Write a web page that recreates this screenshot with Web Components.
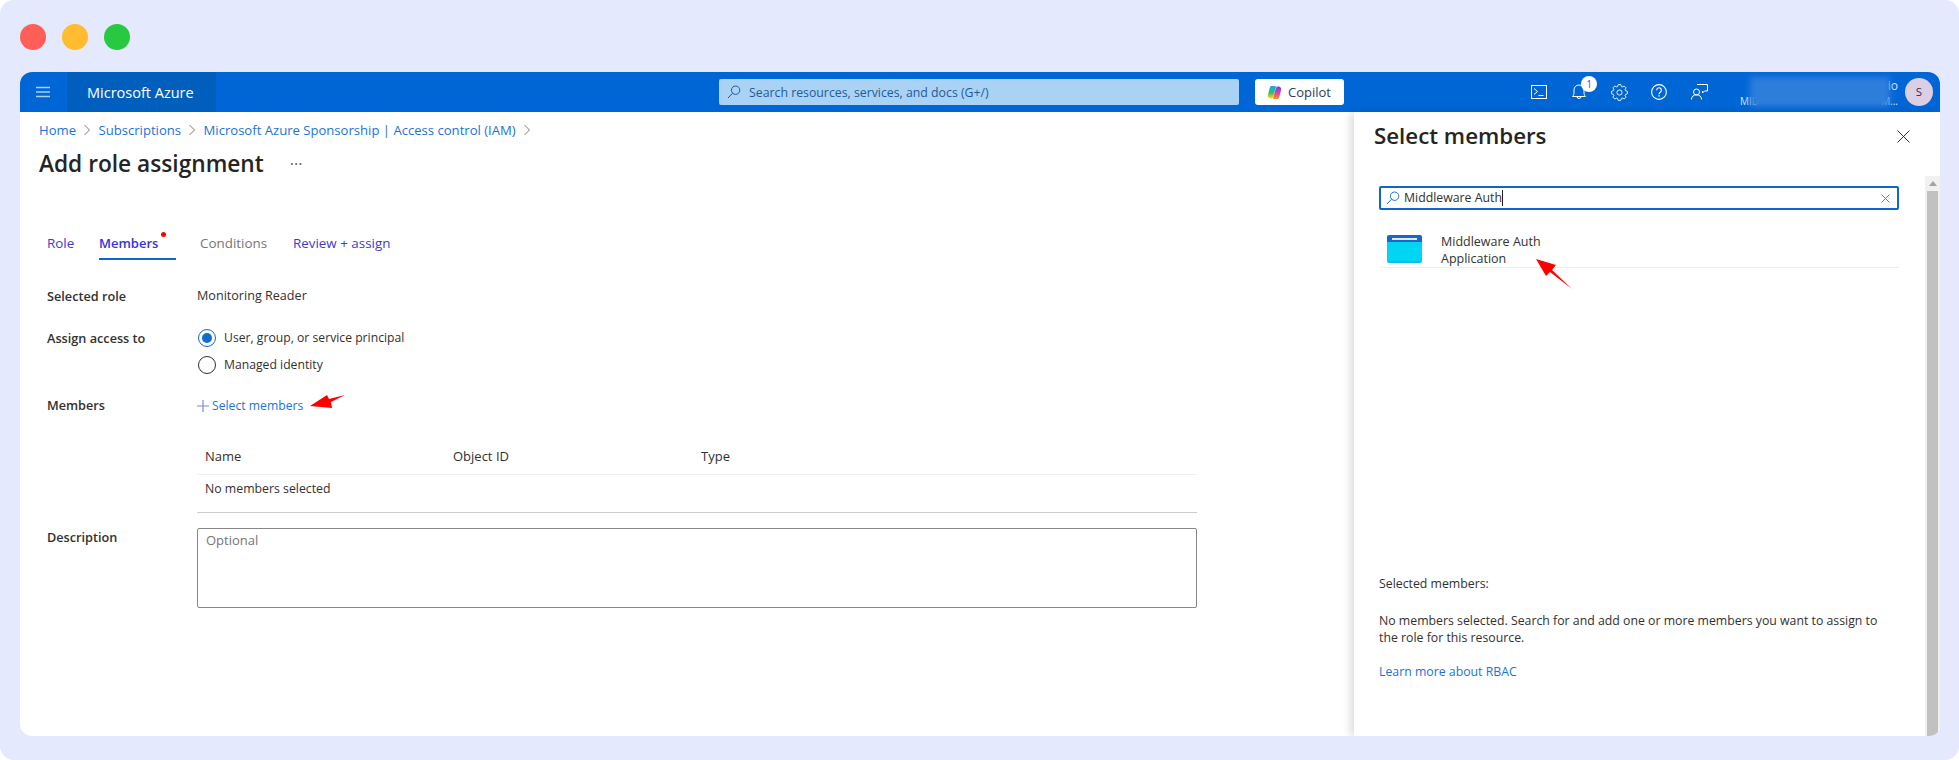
<!DOCTYPE html>
<html>
<head>
<meta charset="utf-8">
<title>Add role assignment</title>
<style>
  html, body { margin: 0; background: #fff; overflow: hidden; }
  body { font-family: "Open Sans", "Noto Sans", sans-serif; color: #323130; }
</style>
</head>
<body>
<shot-frame>
  <traffic-lights></traffic-lights>
  <azure-window>
    <azure-topbar slot="bar"></azure-topbar>
    <role-page></role-page>
    <members-panel></members-panel>
  </azure-window>
  <annot-arrow points="310,406 327,395 329,399 345,395 331,402 332,408"></annot-arrow>
  <annot-arrow points="1536,259 1556,265 1552,270 1572,289 1550,272 1546,276"></annot-arrow>
</shot-frame>

<script>
const FONT = '"Open Sans", "Noto Sans", sans-serif';

function gearPath(cx, cy, teeth, rOut, rIn) {
  let d = '';
  const step = Math.PI * 2 / teeth;
  for (let i = 0; i < teeth; i++) {
    const a = i * step;
    const pts = [[a - step * .42, rIn], [a - step * .2, rOut], [a + step * .2, rOut], [a + step * .42, rIn]];
    pts.forEach((p, j) => {
      const x = (cx + Math.cos(p[0]) * p[1]).toFixed(2);
      const y = (cy + Math.sin(p[0]) * p[1]).toFixed(2);
      d += (i === 0 && j === 0 ? 'M' : 'L') + x + ' ' + y + ' ';
    });
  }
  return d + 'Z';
}

class Base extends HTMLElement {
  constructor() {
    super();
    this.attachShadow({mode: 'open'});
    this.shadowRoot.innerHTML = this.render();
  }
}

class ShotFrame extends Base {
  render() { return `<style>
    :host { display: block; box-sizing: border-box; position: relative; width: 1959px; height: 760px;
      padding: 24px 19px 24px 20px; background: #e4e9fd; border-radius: 14px; overflow: hidden; }
  </style><slot></slot>`; }
}

class TrafficLights extends Base {
  render() { return `<style>
    :host { display: flex; gap: 16px; height: 26px; margin-bottom: 22px; }
    i { width: 26px; height: 26px; border-radius: 50%; }
  </style><i style="background:#ff5f57"></i><i style="background:#febc2e"></i><i style="background:#28c840"></i>`; }
}

class AzureWindow extends Base {
  render() { return `<style>
    :host { display: grid; grid-template-columns: 1fr 586px; grid-template-rows: 40px 1fr; height: 664px;
      background: #fff; border-radius: 12px 12px 10px 12px; overflow: hidden; }
    ::slotted([slot=bar]) { grid-column: 1 / 3; }
  </style><slot name="bar"></slot><slot></slot>`; }
}

class AzureTopbar extends Base {
  render() { return `<style>
    :host { display: flex; align-items: center; height: 40px; background: #0066d6; color: #fff; font: 14px ${FONT}; }
    .menu { width: 47px; display: flex; justify-content: center; }
    .menu svg { margin-right: 1px; }
    .brand { width: 149px; height: 40px; box-sizing: border-box; padding-left: 20px; display: flex; align-items: center;
      background: #005fbd; font-size: 14.5px; }
    .search { margin-left: 503px; width: 520px; height: 26px; box-sizing: border-box; padding-left: 8px; display: flex; align-items: center;
      gap: 8px; background: #aad2f4; border-radius: 2px; color: #1c5c99; font-size: 12.3px; }
    .copilot { margin-left: 16px; width: 89px; height: 26px; box-sizing: border-box; padding-left: 12px; display: flex; align-items: center;
      gap: 6px; background: #fff; border-radius: 3px; color: #2c3a66; font-size: 13px; font-weight: 500; }
    .icons { margin-left: 175px; display: flex; }
    .ic { width: 40px; height: 40px; display: flex; align-items: center; justify-content: center; position: relative; }
    .badge { position: absolute; left: 22px; top: 4px; width: 16px; height: 16px; border-radius: 50%; background: #fff; color: #0066d6;
      font-size: 10px; line-height: 16px; text-align: center; }
    svg { display: block; }
    .user { position: relative; width: 179px; height: 30px; margin-right: 7px; font-size: 12px; color: #dcebfb; }
    .l1 { position: absolute; right: 0; top: 0; line-height: 18px; }
    .l2 { position: absolute; left: 21px; right: 0; top: 17px; display: flex; justify-content: space-between; font-size: 10px; line-height: 14px; }
    .blur { position: absolute; left: 31px; width: 140px; top: 0; height: 30px; background: #2d7edb; filter: blur(3px); }
    .avatar { width: 28px; height: 28px; border-radius: 50%; background: #dccfe4; color: #3e1f63; font-size: 11.5px; line-height: 28px; text-align: center; }
  </style>
  <div class="menu"><svg width="14" height="12" viewBox="0 0 14 12" stroke="#a9d0f5" stroke-width="1.4"><path d="M0 1.5h14M0 6h14M0 10.5h14"/></svg></div>
  <div class="brand">Microsoft Azure</div>
  <div class="search">
    <svg width="14" height="14" viewBox="0 0 14 14" fill="none" stroke="#1c5c99" stroke-width="1"><circle cx="8.6" cy="5.2" r="4.2"/><path d="M5.6 8.2 1 13"/></svg>
    <span>Search resources, services, and docs (G+/)</span>
  </div>
  <div class="copilot">
    <svg width="15" height="15" viewBox="0 0 15 15">
      <defs>
        <linearGradient id="cl" x1="0" y1="0" x2="0" y2="1"><stop offset="0" stop-color="#1fa8ee"/><stop offset=".55" stop-color="#2fc25a"/><stop offset="1" stop-color="#efd41c"/></linearGradient>
        <linearGradient id="cr" x1="0" y1="0" x2="0" y2="1"><stop offset="0" stop-color="#6a4be6"/><stop offset=".55" stop-color="#ee3c9c"/><stop offset="1" stop-color="#f78c26"/></linearGradient>
      </defs>
      <path fill="url(#cl)" stroke="url(#cl)" stroke-width="1.6" stroke-linejoin="round" d="M4.300 1.800H8.200L5.600 10.800 4.800 12.600H3.400C2 12.600 1.300 11.500 1.700 10.200L3.300 3.600C3.500 2.600 3.800 1.800 4.300 1.800Z"/>
      <path fill="url(#cr)" stroke="url(#cr)" stroke-width="1.600" stroke-linejoin="round" d="M10.700 13.200H6.800L9.400 4.200 10.200 2.400H11.600C13 2.400 13.700 3.500 13.300 4.800L11.700 11.400C11.500 12.400 11.200 13.200 10.700 13.200Z"/>
    </svg>
    <span>Copilot</span>
  </div>
  <div class="icons">
    <div class="ic"><svg width="16" height="14" viewBox="0 0 16 14" fill="none" stroke="#fff" stroke-width="1"><rect x=".5" y=".5" width="15" height="13"/><path d="M3 3.500 6.500 6.500 3 9.500M7.500 10.500h5"/></svg></div>
    <div class="ic"><svg width="14" height="16" viewBox="0 0 14 16" fill="none" stroke="#fff" stroke-width="1"><path d="M.5 12.500h13c-1-1-1.500-2-1.500-4.500V6a5 5 0 0 0-10 0v2c0 2.500-.5 3.500-1.500 4.500ZM5 12.500a2 2 0 0 0 4 0"/></svg><span class="badge">1</span></div>
    <div class="ic"><svg width="17" height="17" viewBox="0 0 17 17" fill="none" stroke="#e3effb" stroke-width="1"><path d="${gearPath(8.5, 8.5, 8, 8, 6.2)}"/><circle cx="8.5" cy="8.500" r="2.600"/></svg></div>
    <div class="ic"><svg width="16" height="16" viewBox="0 0 16 16" fill="none" stroke="#fff" stroke-width="1.100"><circle cx="8" cy="8" r="7.400"/><path d="M5.600 6.200a2.400 2.400 0 1 1 3.700 2c-.9.6-1.300 1-1.300 2"/><path stroke-width="1.400" d="M8 11.300v1.300"/></svg></div>
    <div class="ic"><svg width="17" height="16" viewBox="0 0 17 16" fill="none" stroke="#fff" stroke-width="1"><path d="M6 .5h10.500V7H13.500L11.500 9V7"/><circle cx="5.500" cy="8" r="3"/><path d="M.5 15.500c0-3 2-4.700 5-4.700s5 1.700 5 4.700"/></svg></div>
  </div>
  <div class="user">
    <div class="l1">io</div>
    <div class="l2"><span>MID</span><span>M...</span></div>
    <div class="blur"></div>
  </div>
  <div class="avatar">S</div>`; }
}

class RolePage extends Base {
  render() { return `<style>
    :host { display: block; box-sizing: border-box; padding-left: 19px; font: 13px/18px ${FONT}; color: #323130; }
    .crumbs { height: 36px; display: flex; align-items: center; gap: 7.250px; color: #1a73d8; font-size: 13.100px; }
    .crumbs svg { display: block; }
    h1 { margin: 0; height: 31px; padding-bottom: 1px; display: flex; align-items: center; gap: 26px; font-size: 22.700px; font-weight: 600; color: #252423; }
    h1 span { font-size: 16px; font-weight: 400; color: #605e5c; }
    nav { margin: 46px 0 0 8px; height: 34px; display: flex; font-size: 13.400px; }
    nav a { display: flex; align-items: center; position: relative; box-sizing: border-box; color: #3d3dcc; }
    nav a.on { color: #3535dd; font-weight: 600; border-bottom: 2px solid #0f66d0; padding-top: 2px; font-size: 13px; }
    nav a.off { color: #767676; }
    nav i { position: absolute; left: 62px; top: 6px; width: 5px; height: 5px; border-radius: 50%; background: #f00; }
  </style>
  <div class="crumbs">
    <span>Home</span><svg width="8" height="12" viewBox="0 0 8 12" fill="none" stroke="#7a7a7a"><path d="M1.500 1 6.500 6 1.500 11"/></svg>
    <span>Subscriptions</span><svg width="8" height="12" viewBox="0 0 8 12" fill="none" stroke="#7a7a7a"><path d="M1.500 1 6.500 6 1.500 11"/></svg>
    <span>Microsoft Azure Sponsorship | Access control (IAM)</span><svg width="8" height="12" viewBox="0 0 8 12" fill="none" stroke="#7a7a7a"><path d="M1.500 1 6.500 6 1.500 11"/></svg>
  </div>
  <h1>Add role assignment <span>···</span></h1>
  <nav>
    <a style="width:52px">Role</a>
    <a class="on" style="width:77px">Members<i></i></a>
    <a class="off" style="width:24px"></a>
    <a class="off" style="width:93px">Conditions</a>
    <a>Review + assign</a>
  </nav>
  <form-row label="Selected role" style="margin-top:26px">Monitoring Reader</form-row>
  <form-row label="Assign access to" style="margin-top:19px;--label-top:3px">
    <radio-opt checked style="margin-bottom:1px">User, group, or service principal</radio-opt>
    <radio-opt>Managed identity</radio-opt>
  </form-row>
  <form-row label="Members" style="margin-top:17px">
    <add-link>Select members</add-link>
  </form-row>
  <member-table style="margin:22px 0 0 158px"></member-table>
  <form-row label="Description" style="margin-top:15px;--label-top:0px;--label-shift:-1px">
    <text-box>Optional</text-box>
  </form-row>`; }
}

class FormRow extends Base {
  render() { return `<style>
    :host { display: grid; grid-template-columns: 150px 1000px; margin-left: 8px; }
    b { font-weight: 600; color: #323130; padding-top: var(--label-top, 0); margin-top: var(--label-shift, 0); font-size: 12.700px; line-height: 20px; }
    div { line-height: 20px; font-size: 12.600px; }
  </style><b>${this.getAttribute('label')}</b><div><slot></slot></div>`; }
}

class RadioOpt extends Base {
  render() {
    const on = this.hasAttribute('checked');
    return `<style>
      :host { display: flex; align-items: center; gap: 8px; height: 26px; margin-left: 1px; font-size: 12.200px; }
      i { box-sizing: border-box; width: 18px; height: 18px; border-radius: 50%; display: flex; align-items: center; justify-content: center;
        border: 1.2px solid ${on ? '#0f6cd4' : '#323130'}; }
      i::after { content: ""; width: 10px; height: 10px; border-radius: 50%; background: ${on ? '#0f6cd4' : 'transparent'}; }
    </style><i></i><span><slot></slot></span>`;
  }
}

class AddLink extends Base {
  render() { return `<style>
    :host { display: flex; align-items: center; gap: 4px; height: 20px; padding-top: 1px; color: #1b74e0; font-size: 12.200px; }
    svg { display: block; margin-top: -1px; }
    span { margin-left: -1px; }
  </style><svg width="12" height="12" viewBox="0 0 12 12" stroke="#8484e4" stroke-width="1.200"><path d="M6 0v12M0 6h12"/></svg><span><slot></slot></span>`; }
}

class MemberTable extends Base {
  render() { return `<style>
    :host { display: block; width: 1000px; border-bottom: 1px solid #ccc; }
    .head, .row { padding-left: 8px; }
    .head { display: grid; grid-template-columns: 248px 248px 1fr; height: 36px; line-height: 36px; font-weight: 500; border-bottom: 1px solid #eee; }
    .row { height: 37px; line-height: 28px; font-size: 12.300px; }
  </style>
  <div class="head"><span>Name</span><span>Object ID</span><span>Type</span></div>
  <div class="row">No members selected</div>`; }
}

class TextBox extends Base {
  render() { return `<style>
    :host { display: block; box-sizing: border-box; width: 1000px; height: 80px; padding: 1px 8px; border: 1.500px solid #888; border-radius: 2px; color: #757575; font-size: 13px; }
  </style><slot></slot>`; }
}

class MembersPanel extends Base {
  render() { return `<style>
    :host { display: grid; grid-template-columns: 1fr 15px; height: 624px; background: #fff; box-shadow: -4px 0 8px rgba(0,0,0,.13); position: relative;
      font: 12.300px/18px ${FONT}; color: #323130; }
    .body { padding: 0 0 0 25px; }
    .title { height: 48px; margin-left: -5px; display: flex; align-items: center; justify-content: space-between; padding-right: 15px; }
    h2 { margin: 0; font-size: 22.300px; font-weight: 600; color: #252423; }
    .title svg { display: block; }
    .search { margin-top: 26px; width: 520px; height: 24px; box-sizing: border-box; border: 2px solid #0f66d0; border-radius: 2px;
      display: flex; align-items: center; padding: 0 7px 0 5px; gap: 4px; }
    .search em { flex: 1; font-style: normal; }
    .search em::after { content: ""; display: inline-block; width: 1px; height: 16px; background: #222; vertical-align: -4px; }
    .result { margin-top: 23px; width: 520px; height: 35px; box-sizing: border-box; border-bottom: 1px solid #eee; display: flex; gap: 19px; padding-left: 8px;
      font-size: 12.500px; line-height: 17px; }
    .app { width: 35px; height: 28px; margin-top: 2px; border-radius: 2px; flex: none; position: relative;
      background: linear-gradient(#1b66c9 0 7px, #00d6f4 7px 26px, #0cc0e0 26px); }
    .app::before { content: ""; position: absolute; left: 5px; right: 5px; top: 3px; height: 2px; background: #dfe9f7; }
    .sel { margin-top: 307px; }
    p { margin: 20px 0 0; width: 510px; line-height: 16.500px; }
    a { display: block; margin-top: 17px; color: #1a73d8; }
    scroll-rail { margin-top: 64px; }
  </style>
  <div class="body">
    <div class="title"><h2>Select members</h2>
      <svg width="13" height="13" viewBox="0 0 13 13" stroke="#323130"><path d="M.5.5l12 12M12.500.5l-12 12"/></svg></div>
    <div class="search">
      <svg width="14" height="14" viewBox="0 0 14 14" fill="none" stroke="#1b74e0" stroke-width="1"><circle cx="8.600" cy="5.200" r="4.200"/><path d="M5.600 8.200 1 13"/></svg>
      <em>Middleware Auth</em>
      <svg width="9" height="9" viewBox="0 0 9 9" stroke="#777"><path d="M.5.5l8 8M8.500.5l-8 8"/></svg>
    </div>
    <div class="result"><div class="app"></div><div>Middleware Auth<br>Application</div></div>
    <div class="sel">Selected members:</div>
    <p>No members selected. Search for and add one or more members you want to assign to the role for this resource.</p>
    <a>Learn more about RBAC</a>
  </div>
  <scroll-rail></scroll-rail>`; }
}

class ScrollRail extends Base {
  render() { return `<style>
    :host { display: flex; flex-direction: column; background: #f1f1f1; height: 560px; }
    .up { height: 15px; display: flex; align-items: center; justify-content: center; }
    .up::after { content: ""; border: 4px solid transparent; border-bottom: 5px solid #a3a3a3; border-top: 0; }
    .thumb { flex: 1; margin: 0 2px 0 2px; background: #c1c1c1; }
  </style><div class="up"></div><div class="thumb"></div>`; }
}

class AnnotArrow extends Base {
  render() { return `<style>
    :host { position: absolute; left: 0; top: 0; width: 1959px; height: 760px; pointer-events: none; }
    svg { display: block; }
  </style><svg width="1959" height="760" viewBox="0 0 1959 760"><polygon fill="#f00" points="${this.getAttribute('points')}"/></svg>`; }
}

customElements.define('shot-frame', ShotFrame);
customElements.define('traffic-lights', TrafficLights);
customElements.define('azure-window', AzureWindow);
customElements.define('azure-topbar', AzureTopbar);
customElements.define('role-page', RolePage);
customElements.define('form-row', FormRow);
customElements.define('radio-opt', RadioOpt);
customElements.define('add-link', AddLink);
customElements.define('member-table', MemberTable);
customElements.define('text-box', TextBox);
customElements.define('members-panel', MembersPanel);
customElements.define('scroll-rail', ScrollRail);
customElements.define('annot-arrow', AnnotArrow);
</script>
</body>
</html>
